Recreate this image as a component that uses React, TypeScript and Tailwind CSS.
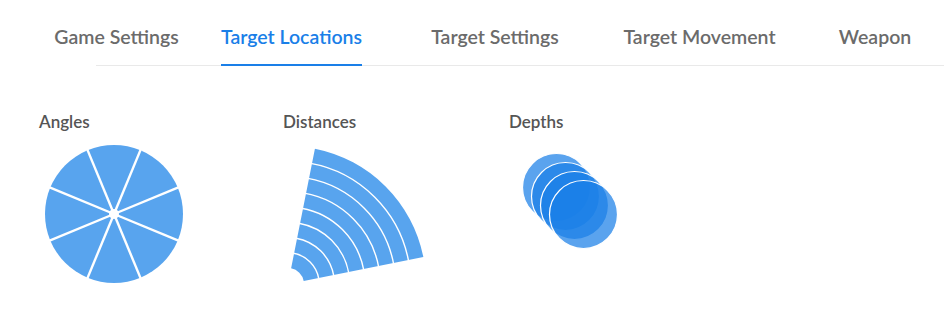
import React from "react";

const tabs = [
  { label: "Game Settings", w: "w-[175px]" },
  { label: "Target Locations", w: "w-[175px]", active: true },
  { label: "Target Settings", w: "w-[232px]" },
  { label: "Target Movement", w: "w-[177px]" },
  { label: "Weapon", w: "w-[174px]" },
];

const BLUE = "#58a4ee";

function Angles() {
  const cx = 70;
  const cy = 70;
  const r = 69;
  const lines = Array.from({ length: 8 }, (_, i) => {
    const a = ((22.5 + 45 * i) * Math.PI) / 180;
    return { x: cx + (r + 2) * Math.cos(a), y: cy + (r + 2) * Math.sin(a) };
  });
  return (
    <svg width="140" height="140" viewBox="0 0 140 140">
      <circle cx={cx} cy={cy} r={r} fill={BLUE} />
      {lines.map((p, i) => (
        <line key={i} x1={cx} y1={cy} x2={p.x} y2={p.y} stroke="#fff" strokeWidth="2.4" />
      ))}
      <circle cx={cx} cy={cy} r="5" fill="#fff" />
    </svg>
  );
}

function Distances() {
  const cx = 5;
  const cy = 140;
  const a1 = (11.25 * Math.PI) / 180;
  const a2 = (78.75 * Math.PI) / 180;
  const pt = (r: number, a: number) => `${cx + r * Math.cos(a)} ${cy - r * Math.sin(a)}`;
  const R = 138;
  const r0 = 16;
  const d = `M ${pt(r0, a1)} L ${pt(R, a1)} A ${R} ${R} 0 0 0 ${pt(R, a2)} L ${pt(r0, a2)} A ${r0} ${r0} 0 0 1 ${pt(r0, a1)} Z`;
  const arcs = Array.from({ length: 7 }, (_, k) => r0 + 15.25 * (k + 1));
  return (
    <svg width="145" height="145" viewBox="0 0 145 145">
      <path d={d} fill={BLUE} />
      {arcs.map((r, i) => (
        <path
          key={i}
          d={`M ${pt(r, a1 - 0.02)} A ${r} ${r} 0 0 0 ${pt(r, a2 + 0.02)}`}
          fill="none"
          stroke="#fff"
          strokeWidth="1.4"
        />
      ))}
    </svg>
  );
}

function Depths() {
  const circles = [0, 1, 2, 3].map((k) => ({ x: 47.5 + 9 * k, y: 43.5 + 9 * k }));
  return (
    <svg width="120" height="120" viewBox="0 0 120 120">
      {circles.map((c, i) => (
        <circle key={i} cx={c.x} cy={c.y} r="34" fill="#1a80e8" fillOpacity="0.72" stroke="#fff" strokeWidth="1.2" />
      ))}
    </svg>
  );
}

export default function App() {
  return (
    <div
      className="w-[944px] h-[328px] bg-white overflow-hidden"
      style={{ fontFamily: "Lato, 'Liberation Sans', sans-serif" }}
    >
      <div className="relative z-10 flex pl-[29px]">
        {tabs.map((t) => (
          <div key={t.label} className={`${t.w} shrink-0 flex justify-center`}>
            <span
              className={`pt-[25px] pb-[15px] leading-[24px] text-[19.5px] font-semibold whitespace-nowrap border-b-2 ${
                t.active ? "text-[#1a7fe8] border-[#1a7fe8]" : "text-[#6b6b6b] border-transparent"
              }`}
            >
              {t.label}
            </span>
          </div>
        ))}
      </div>
      <div className="ml-[96px] -mt-px h-px bg-[#e9e9e9]" />
      <div className="flex pl-[39px] mt-[46px]">
        <div className="w-[244px] shrink-0 flex flex-col">
          <div className="text-[17px] leading-[20px] font-semibold text-[#555]">Angles</div>
          <div className="mt-[12px] ml-[5px]">
            <Angles />
          </div>
        </div>
        <div className="w-[226px] shrink-0 flex flex-col">
          <div className="text-[17px] leading-[20px] font-semibold text-[#555]">Distances</div>
          <div className="mt-[12px]">
            <Distances />
          </div>
        </div>
        <div className="flex flex-col">
          <div className="text-[17px] leading-[20px] font-semibold text-[#555]">Depths</div>
          <div className="mt-[12px]">
            <Depths />
          </div>
        </div>
      </div>
    </div>
  );
}
